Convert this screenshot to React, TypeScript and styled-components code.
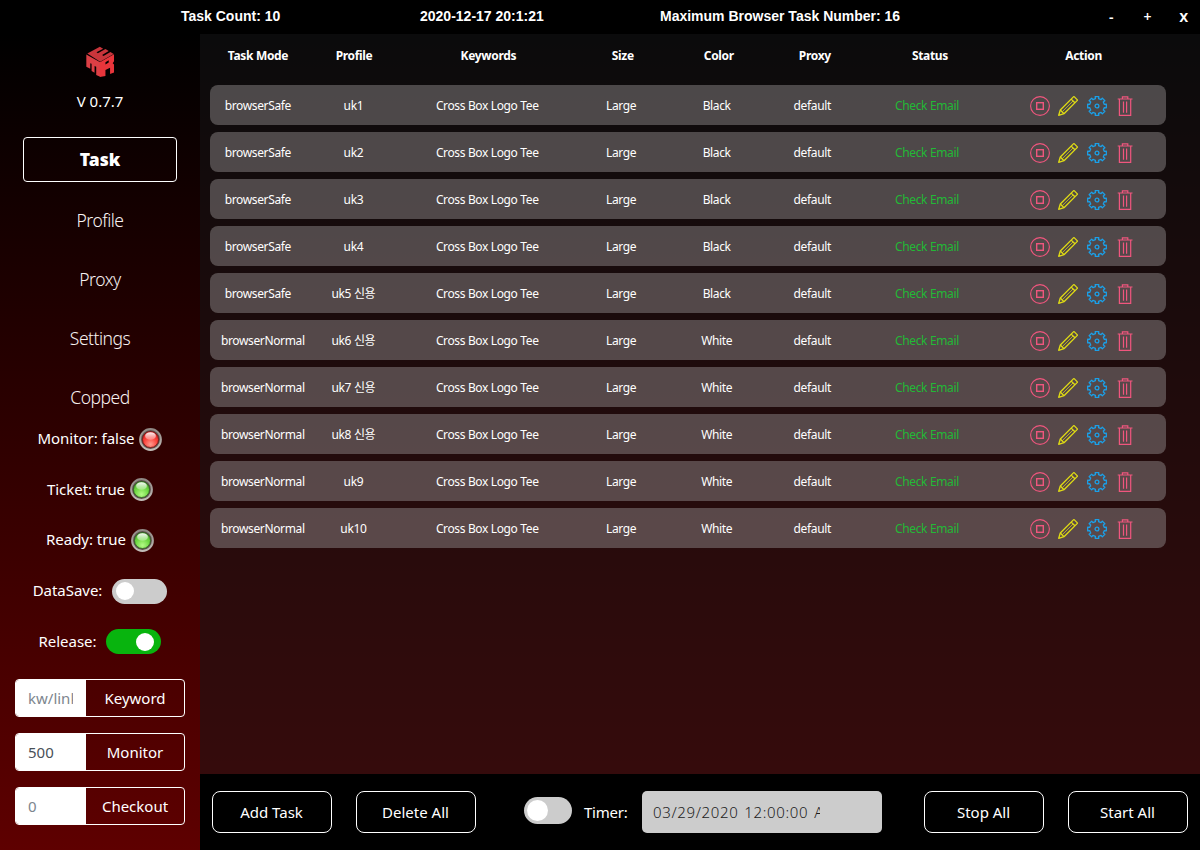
import React from "react";
import styled, { createGlobalStyle } from "styled-components";

const GlobalStyle = createGlobalStyle`
  * { box-sizing: border-box; }
  body {
    margin: 0;
    background: #000;
    color: #fff;
    font-family: "Noto Sans", "Noto Sans CJK KR", sans-serif;
    overflow: hidden;
  }
  button, input { font-family: inherit; }
`;

const Window = styled.div`
  width: 1200px;
  height: 850px;
  display: flex;
  flex-direction: column;
  background: #000;
`;

const TitleBar = styled.header`
  height: 34px;
  flex: none;
  display: flex;
  padding-left: 181px;
  font: bold 14px/32px "Liberation Sans", Arial, sans-serif;
  white-space: nowrap;
`;

const TitleItem = styled.div<{ $width: number }>`
  width: ${(p) => p.$width}px;
`;

const WindowButtons = styled.div`
  margin-left: auto;
  width: 109px;
  margin-right: -2px;
  display: flex;
  font: 600 14px/33px "Noto Sans", sans-serif;
`;

const WindowButton = styled.span<{ $size?: number }>`
  flex: 1;
  font-size: ${(p) => p.$size ?? 14}px;
  text-align: center;
`;

const Body = styled.div`
  flex: 1;
  min-height: 0;
  display: flex;
  background: linear-gradient(#000, #5e0000);
`;

const Sidebar = styled.aside`
  width: 200px;
  flex: none;
  display: flex;
  flex-direction: column;
  align-items: center;
  padding-top: 12px;
`;

const Version = styled.div`
  height: 60px;
  padding-top: 13px;
  font-size: 15px;
  line-height: 22px;
`;

const NavItem = styled.a<{ $active?: boolean }>`
  width: 154px;
  height: 45px;
  margin-bottom: 14px;
  flex: none;
  display: flex;
  align-items: center;
  justify-content: center;
  border: 1px solid ${(p) => (p.$active ? "#fff" : "transparent")};
  border-radius: 4px;
  font-size: 17.5px;
  font-weight: ${(p) => (p.$active ? 900 : 300)};
  letter-spacing: ${(p) => (p.$active ? 0 : -0.5)}px;
  line-height: 42px;
  padding: ${(p) => (p.$active ? "0 0 2px" : "2px 0 0")};
  color: ${(p) => (p.$active ? "#fff" : "#f8f2f2")};
`;

const StatusList = styled.div`
  display: flex;
  flex-direction: column;
  margin-top: -18px;
  margin-bottom: 12px;
`;

const StatusRow = styled.div<{ $gap: number }>`
  height: 50.6px;
  display: flex;
  align-items: center;
  justify-content: center;
  gap: ${(p) => p.$gap}px;
  font-size: 15px;
  letter-spacing: -0.04px;
  white-space: nowrap;
`;

const StatusText = styled.span`
  padding-bottom: 2px;
`;

const Switch = styled.span<{ $on?: boolean; $large?: boolean }>`
  width: ${(p) => (p.$large ? 48 : 55)}px;
  height: ${(p) => (p.$large ? 27 : 25)}px;
  flex: none;
  display: flex;
  align-items: center;
  justify-content: ${(p) => (p.$on ? "flex-end" : "flex-start")};
  padding: 0 ${(p) => (p.$large ? 3 : p.$on ? 7 : 4)}px;
  border-radius: 14px;
  background: ${(p) => (p.$on ? "#08b40e" : "#ccc")};
  &::after {
    content: "";
    width: ${(p) => (p.$large ? 21 : 18)}px;
    height: ${(p) => (p.$large ? 21 : 18)}px;
    border-radius: 50%;
    background: #fff;
  }
`;

const InputGroup = styled.div`
  width: 170px;
  height: 38px;
  margin-bottom: 16px;
  flex: none;
  display: flex;
  border: 1px solid #fff;
  border-radius: 4px;
  overflow: hidden;
`;

const GroupField = styled.div<{ $filled?: boolean }>`
  width: 70px;
  padding: 0 13px 0 12px;
  background: #fff;
  color: ${(p) => (p.$filled ? "#495057" : "#7d868e")};
  font-size: 15px;
  line-height: 36px;
`;

const FieldText = styled.div`
  overflow: hidden;
  white-space: nowrap;
`;

const GroupButton = styled.button`
  flex: 1;
  padding: 0;
  border: 0;
  background: transparent;
  color: #fff;
  font-size: 15px;
  line-height: 36px;
`;

const Content = styled.div`
  flex: 1;
  min-width: 0;
  display: flex;
  flex-direction: column;
`;

const Main = styled.main`
  flex: 1;
  padding-left: 10px;
  background: rgba(22, 22, 24, 0.5);
`;

const columns = "10fr 10fr 18fr 10fr 10fr 10fr 14fr 18fr";

const HeaderRow = styled.div`
  width: 960px;
  height: 51px;
  display: grid;
  grid-template-columns: ${columns};
  font-size: 12px;
  font-weight: 700;
  letter-spacing: -0.33px;
  line-height: 43px;
  text-align: center;
`;

const TaskRow = styled.div`
  width: 956px;
  height: 40px;
  margin-bottom: 7px;
  display: grid;
  grid-template-columns: ${columns};
  border-radius: 8px;
  background: rgba(150, 147, 145, 0.46);
  font-size: 12px;
  letter-spacing: -0.36px;
  line-height: 41px;
  text-align: center;
  white-space: nowrap;
`;

const Cell = styled.div<{ $shift?: number }>`
  min-width: 0;
  padding-left: ${(p) => p.$shift ?? 0}px;
`;

const StatusCell = styled(Cell)`
  color: #22b936;
`;

const Actions = styled.div`
  height: 40px;
  display: flex;
  align-items: center;
  gap: 8.5px;
  padding: 2px 0 0 36px;
`;

const Footer = styled.footer`
  height: 76px;
  flex: none;
  display: flex;
  align-items: flex-start;
  padding: 17px 12px 0;
  background: #000;
  font-size: 15px;
`;

const FooterButton = styled.button<{ $left?: number }>`
  width: 120px;
  height: 42px;
  flex: none;
  margin-left: ${(p) => p.$left ?? 0}px;
  padding: 0 1px 0 0;
  border: 1px solid #fff;
  border-radius: 8px;
  background: transparent;
  color: #fff;
  font-size: 15px;
`;

const Timer = styled.div`
  width: 118px;
  height: 42px;
  margin-left: 48px;
  display: flex;
  align-items: center;
  gap: 12px;
  padding-bottom: 3px;
`;

const TimerLabel = styled.span`
  padding-top: 2px;
  letter-spacing: -0.25px;
`;

const DateInput = styled.div`
  width: 240px;
  height: 42px;
  padding-left: 11px;
  border-radius: 5px;
  background: #ccc;
  color: #1c1c1c;
  font-size: 15px;
  font-weight: 300;
  line-height: 42px;
`;

const DateText = styled.div`
  width: 167px;
  overflow: hidden;
  white-space: nowrap;
  letter-spacing: 0.64px;
  word-spacing: 1.5px;
`;

const Logo = () => (
  <svg width="29" height="31" viewBox="0 0 86 94">
    <path fill="#c9353b" d="M3 23 41 2 51 8 31 19 35 22 58 9 68 15 48 27 52 30 73 18 83 24 42 48Z" />
    <path fill="#dc3f45" d="M0 26 42 49V93L30 88V63L25 61V81L16 76V54L12 52V69L0 63Z" />
    <path fill="#e8353b" fillRule="evenodd" d="M41 49 84 25V46L80 52 84 56V80L72 85V66L58 73V91L41 94ZM58 49V56L68 50V43Z" />
  </svg>
);

const Led = ({ on }: { on: boolean }) => {
  const id = on ? "led-green" : "led-red";
  return (
    <svg width="23" height="23" viewBox="0 0 23 23">
      <defs>
        <radialGradient id={id} cx="50%" cy="80%" r="85%">
          <stop offset="0" stopColor={on ? "#b4fa86" : "#ff9a8e"} />
          <stop offset="0.5" stopColor={on ? "#70d944" : "#fb443c"} />
          <stop offset="1" stopColor={on ? "#48a52a" : "#d01616"} />
        </radialGradient>
        <linearGradient id={id + "-rim"} x1="0" y1="0" x2="0" y2="1">
          <stop offset="0" stopColor="#8f8884" />
          <stop offset="1" stopColor="#c2bdb8" />
        </linearGradient>
        <linearGradient id={id + "-shine"} x1="0" y1="0" x2="0" y2="1">
          <stop offset="0" stopColor="#fff" stopOpacity="0.95" />
          <stop offset="1" stopColor="#fff" stopOpacity="0.25" />
        </linearGradient>
      </defs>
      <circle cx="11.5" cy="11.5" r="10.4" fill="#5b504b" stroke={`url(#${id}-rim)`} strokeWidth="2" />
      <circle cx="11.5" cy="11.5" r="8" fill={`url(#${id})`} stroke={on ? "#2c5d20" : "#781010"} strokeWidth="0.8" />
      <ellipse cx="11.5" cy="8" rx="5.4" ry="3.8" fill={`url(#${id}-shine)`} />
    </svg>
  );
};

const StopIcon = () => (
  <svg width="20" height="20" viewBox="0 0 20 20" fill="none" stroke="#f0567e">
    <circle cx="10" cy="10" r="9.4" strokeWidth="1.1" />
    <rect x="6.7" y="6.7" width="6.6" height="6.6" strokeWidth="1.4" />
  </svg>
);

const PencilIcon = () => (
  <svg width="20" height="20" viewBox="0 0 20 20" fill="none" stroke="#e0dc14" strokeWidth="1.3" strokeLinejoin="round">
    <path d="M.7 19.3 2.3 14 15.4.9q.5-.5 1 0L19.1 3.6q.5.5 0 1L6 17.7Z" />
    <path d="M2.3 14 6 17.7M13.2 3.1 16.9 6.8" />
    <path d="M4.6 15.4 15 5" strokeWidth=".7" />
  </svg>
);

const gearPath = (() => {
  const points: string[] = [];
  const at = (r: number, deg: number) => {
    const a = (deg * Math.PI) / 180;
    points.push(`${(10 + r * Math.sin(a)).toFixed(2)} ${(10 - r * Math.cos(a)).toFixed(2)}`);
  };
  for (let i = 0; i < 8; i++) {
    const c = i * 45;
    at(7.5, c - 12);
    at(9.5, c - 11);
    at(9.5, c + 11);
    at(7.5, c + 12);
  }
  return `M${points.join("L")}Z`;
})();

const GearIcon = () => (
  <svg width="20" height="20" viewBox="0 0 20 20" fill="none" stroke="#1ba0e8" strokeWidth="1.3" strokeLinejoin="round">
    <path d={gearPath} />
    <circle cx="10" cy="10" r="1.9" />
  </svg>
);

const TrashIcon = () => (
  <svg width="20" height="20" viewBox="0 0 20 20" fill="none" stroke="#f0567e" strokeWidth="1.2">
    <path d="M2.7 3H17.5M7.4 3V.8H12.8V3M4.4 3V19.4H15.7V3M8.5 5.5V16.8M11.6 5.5V16.8" />
  </svg>
);

const tasks = [
  ["browserSafe", "uk1", "Black"],
  ["browserSafe", "uk2", "Black"],
  ["browserSafe", "uk3", "Black"],
  ["browserSafe", "uk4", "Black"],
  ["browserSafe", "uk5 신용", "Black"],
  ["browserNormal", "uk6 신용", "White"],
  ["browserNormal", "uk7 신용", "White"],
  ["browserNormal", "uk8 신용", "White"],
  ["browserNormal", "uk9", "White"],
  ["browserNormal", "uk10", "White"],
];

const headings = ["Task Mode", "Profile", "Keywords", "Size", "Color", "Proxy", "Status", "Action"];

export default function App() {
  return (
    <Window>
      <GlobalStyle />
      <TitleBar>
        <TitleItem $width={239}>Task Count: 10</TitleItem>
        <TitleItem $width={240}>2020-12-17 20:1:21</TitleItem>
        <TitleItem $width={300}>Maximum Browser Task Number: 16</TitleItem>
        <WindowButtons>
          <WindowButton>-</WindowButton>
          <WindowButton>+</WindowButton>
          <WindowButton $size={16}>x</WindowButton>
        </WindowButtons>
      </TitleBar>
      <Body>
        <Sidebar>
          <Logo />
          <Version>V 0.7.7</Version>
          <NavItem $active>Task</NavItem>
          <NavItem>Profile</NavItem>
          <NavItem>Proxy</NavItem>
          <NavItem>Settings</NavItem>
          <NavItem>Copped</NavItem>
          <StatusList>
            <StatusRow $gap={5}>
              <StatusText>Monitor: false</StatusText>
              <Led on={false} />
            </StatusRow>
            <StatusRow $gap={5}>
              <StatusText>Ticket: true</StatusText>
              <Led on />
            </StatusRow>
            <StatusRow $gap={5}>
              <StatusText>Ready: true</StatusText>
              <Led on />
            </StatusRow>
            <StatusRow $gap={10}>
              <StatusText>DataSave:</StatusText>
              <Switch />
            </StatusRow>
            <StatusRow $gap={10}>
              <StatusText>Release:</StatusText>
              <Switch $on />
            </StatusRow>
          </StatusList>
          <InputGroup>
            <GroupField><FieldText>kw/link</FieldText></GroupField>
            <GroupButton>Keyword</GroupButton>
          </InputGroup>
          <InputGroup>
            <GroupField $filled><FieldText>500</FieldText></GroupField>
            <GroupButton>Monitor</GroupButton>
          </InputGroup>
          <InputGroup>
            <GroupField><FieldText>0</FieldText></GroupField>
            <GroupButton>Checkout</GroupButton>
          </InputGroup>
        </Sidebar>
        <Content>
          <Main>
            <HeaderRow>
              {headings.map((h) => (
                <Cell key={h}>{h}</Cell>
              ))}
            </HeaderRow>
            {tasks.map(([mode, profile, color]) => (
              <TaskRow key={profile}>
                <Cell $shift={mode === "browserNormal" ? 10 : 0}>{mode}</Cell>
                <Cell>{profile}</Cell>
                <Cell>Cross Box Logo Tee</Cell>
                <Cell>Large</Cell>
                <Cell>{color}</Cell>
                <Cell>default</Cell>
                <StatusCell>Check Email</StatusCell>
                <Actions>
                  <StopIcon />
                  <PencilIcon />
                  <GearIcon />
                  <TrashIcon />
                </Actions>
              </TaskRow>
            ))}
          </Main>
          <Footer>
            <FooterButton>Add Task</FooterButton>
            <FooterButton $left={24}>Delete All</FooterButton>
            <Timer>
              <Switch $large />
              <TimerLabel>Timer:</TimerLabel>
            </Timer>
            <DateInput><DateText>03/29/2020 12:00:00 AM</DateText></DateInput>
            <FooterButton $left={42}>Stop All</FooterButton>
            <FooterButton $left={24}>Start All</FooterButton>
          </Footer>
        </Content>
      </Body>
    </Window>
  );
}
